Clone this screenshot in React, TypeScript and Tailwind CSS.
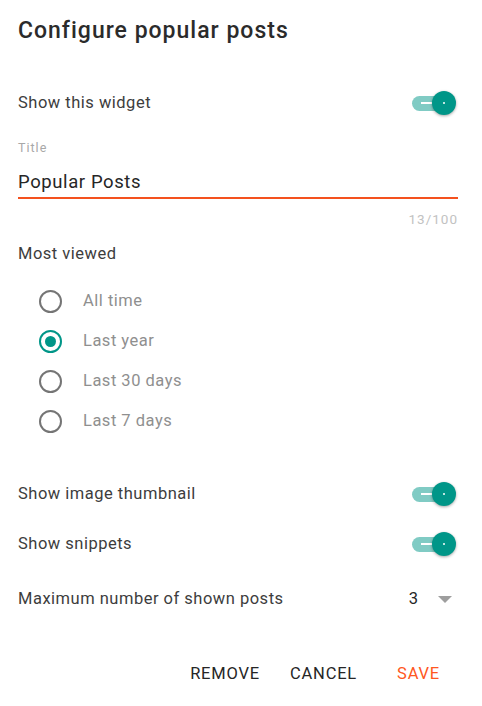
import { useState } from 'react'

function Toggle({ on = true }: { on?: boolean }) {
  return (
    <div className="relative h-6 w-[48px]">
      <div
        className={`absolute left-[2px] top-[5px] h-[15px] w-[38px] rounded-full ${on ? 'bg-[#80cbc4]' : 'bg-[#bdbdbd]'}`}
      >
        <div className="absolute left-[9px] top-[6px] h-[2px] w-[12px] bg-white" />
      </div>
      <div className="absolute left-[22px] top-0 flex h-6 w-6 items-center justify-center rounded-full bg-[#009688] shadow-[0_1px_3px_rgba(0,0,0,0.35)]">
        <div className="h-[2px] w-[2px] rounded-full bg-white" />
      </div>
    </div>
  )
}

function Radio({ label, checked, onSelect }: { label: string; checked: boolean; onSelect: () => void }) {
  return (
    <button type="button" onClick={onSelect} className="flex h-10 items-center text-left">
      <span className="ml-[20px] flex h-6 w-6 items-center justify-center">
        <span
          className={`flex h-[23px] w-[23px] items-center justify-center rounded-full border-2 ${
            checked ? 'border-[#009688]' : 'border-[#757575]'
          }`}
        >
          {checked && <span className="h-[11px] w-[11px] rounded-full bg-[#009688]" />}
        </span>
      </span>
      <span className="ml-[21px] text-[16.5px] tracking-[0.5px] text-[#8f8f8f]">{label}</span>
    </button>
  )
}

const periods = ['All time', 'Last year', 'Last 30 days', 'Last 7 days']

export default function App() {
  const [period, setPeriod] = useState('Last year')
  const [title, setTitle] = useState('Popular Posts')

  return (
    <div
      className="h-[706px] w-[482px] bg-white pl-[18px] pr-[24px] pt-[17px] text-[#3d3d3d]"
      style={{ fontFamily: 'Roboto, "Liberation Sans", sans-serif' }}
    >
      <h1 className="text-[23px] font-medium leading-[28px] tracking-[1px] text-[#2b2b2b]">Configure popular posts</h1>

      <div className="mt-[42px] flex h-8 items-center justify-between">
        <span className="text-[16.5px] tracking-[0.5px]">Show this widget</span>
        <Toggle />
      </div>

      <label className="mt-[21px] block text-[12.5px] leading-4 tracking-[1px] text-[#a8a8a8]">Title</label>
      <input
        value={title}
        onChange={(e) => setTitle(e.target.value)}
        className="mt-[14px] block h-[29px] w-full border-b-2 border-[#f4511e] pb-[3px] text-[18.5px] leading-6 tracking-[0.6px] text-[#262626] outline-none"
      />
      <div className="mt-[12px] text-right text-[13.5px] leading-4 tracking-[1px] text-[#c2c2c2]">{title.length}/100</div>

      <div className="mt-[15px] text-[16.5px] leading-6 tracking-[0.5px]">Most viewed</div>
      <div className="mt-[15px] flex flex-col">
        {periods.map((p) => (
          <Radio key={p} label={p} checked={period === p} onSelect={() => setPeriod(p)} />
        ))}
      </div>

      <div className="mt-[37px] flex h-8 items-center justify-between">
        <span className="text-[16.5px] tracking-[0.5px]">Show image thumbnail</span>
        <Toggle />
      </div>
      <div className="mt-[18px] flex h-8 items-center justify-between">
        <span className="text-[16.5px] tracking-[0.5px]">Show snippets</span>
        <Toggle />
      </div>

      <div className="mt-[23px] flex h-8 items-center justify-between">
        <span className="text-[16.5px] tracking-[0.5px]">Maximum number of shown posts</span>
        <div className="mr-[6px] flex items-center gap-[20px]">
          <span className="text-[16.5px] text-[#262626]">3</span>
          <span className="h-0 w-0 border-x-[7px] border-t-[7px] border-x-transparent border-t-[#9e9e9e]" />
        </div>
      </div>

      <div className="mt-[41px] flex h-9 items-center justify-end pr-[18px] text-[16.5px] tracking-[0.8px]">
        <button type="button" className="text-[#262626]">REMOVE</button>
        <button type="button" className="ml-[30px] text-[#262626]">CANCEL</button>
        <button type="button" className="ml-[40px] text-[#ff5722]">SAVE</button>
      </div>
    </div>
  )
}
